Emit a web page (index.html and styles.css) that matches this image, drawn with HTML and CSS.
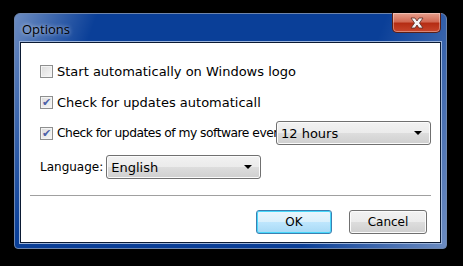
FILE: index.html
```html
<!DOCTYPE html>
<html lang="en">
<head>
  <meta charset="UTF-8">
  <title>Options</title>
  <link rel="stylesheet" href="styles.css">
</head>
<body>
  <div class="window">
    <div class="title-bar">
      <span class="title">Options</span>
      <button class="close-button">
        <svg width="16" height="12" viewBox="0 0 16 12">
          <path d="M2 1 L6 1 L8 4 L10 1 L14 1 L10.5 6 L14 11 L10 11 L8 8 L6 11 L2 11 L5.5 6 Z" fill="#f4f4f4" stroke="#5a2a22" stroke-width="0.8"/>
        </svg>
      </button>
    </div>

    <div class="client">
      <div class="options">
        <label class="row">
          <span class="checkbox"></span>
          <span class="label-text">Start automatically on Windows logo</span>
        </label>
        <label class="row">
          <span class="checkbox checked">&#10004;</span>
          <span class="label-text">Check for updates automaticall</span>
        </label>
        <div class="row">
          <span class="checkbox checked">&#10004;</span>
          <span class="label-text clipped">Check for updates of my software ever</span>
          <div class="dropdown">
            <span>12 hours</span>
            <span class="arrow"></span>
          </div>
        </div>
        <div class="row language-row">
          <span class="label-text">Language:</span>
          <div class="dropdown">
            <span>English</span>
            <span class="arrow"></span>
          </div>
        </div>
      </div>

      <div class="separator"></div>

      <div class="buttons">
        <button class="win-button default">OK</button>
        <button class="win-button">Cancel</button>
      </div>
    </div>
  </div>
</body>
</html>
```

FILE: styles.css
```css
* {
  box-sizing: border-box;
  margin: 0;
  padding: 0;
}

body {
  background: #000;
  width: 463px;
  height: 266px;
  padding-top: 13px;
  padding-left: 14px;
  font-family: Tahoma, "DejaVu Sans", sans-serif;
}

.window {
  width: 433px;
  height: 236px;
  border-radius: 6px 6px 4px 4px;
  border: 1px solid #6e86ad;
  background:
    linear-gradient(110deg, rgba(255,255,255,0.4) 0%, rgba(255,255,255,0) 16%, rgba(255,255,255,0) 72%, rgba(255,255,255,0.4) 100%),
    #0a3f98;
  padding: 0 5px 5px 5px;
  display: flex;
  flex-direction: column;
}

.title-bar {
  height: 28px;
  display: flex;
  justify-content: space-between;
  align-items: flex-start;
}

.title {
  font-family: "Open Sans", "Noto Sans", sans-serif;
  font-size: 13px;
  color: #000;
  padding-top: 6px;
  padding-left: 2px;
  text-shadow: 0 0 4px rgba(255,255,255,0.8);
}

.close-button {
  width: 49px;
  height: 20px;
  margin-top: -1px;
  border: 1px solid #5a1f16;
  border-top: none;
  border-radius: 0 0 5px 5px;
  background: linear-gradient(#e7a08e 0%, #d26a54 45%, #b52d14 55%, #c8462c 100%);
  box-shadow: inset 0 0 0 1px rgba(255,255,255,0.35);
  display: flex;
  align-items: center;
  justify-content: center;
}

.client {
  flex: 1;
  background: #fff;
  border: 1px solid #0b1a33;
  box-shadow: 0 0 0 1px #9cb4da;
  display: flex;
  flex-direction: column;
}

.options {
  display: flex;
  flex-direction: column;
  padding: 18px 0 0 19px;
}

.row {
  display: flex;
  align-items: center;
  height: 20px;
  margin-bottom: 11px;
  font-size: 13px;
  color: #000;
}

.row:nth-child(3) {
  margin-bottom: 14px;
}

.checkbox {
  flex-shrink: 0;
  width: 13px;
  height: 13px;
  border: 1px solid #8e8f8f;
  background: linear-gradient(135deg, #dcdcdc, #f7f7f7);
  box-shadow: inset 0 0 0 1px #f4f4f4;
  margin-right: 4px;
  font-size: 11px;
  line-height: 11px;
  text-align: center;
  color: #4c61a8;
}

.label-text {
  white-space: nowrap;
  flex-shrink: 0;
}

.clipped {
  width: 219px;
  overflow: hidden;
  font-size: 12.3px;
  letter-spacing: -0.5px;
}

.language-row .label-text {
  font-size: 12px;
  margin-right: 3px;
}

.dropdown {
  flex-shrink: 0;
  width: 155px;
  height: 24px;
  border: 1px solid #707070;
  border-radius: 3px;
  background: linear-gradient(#f2f2f2 0%, #ebebeb 50%, #dddddd 51%, #cfcfcf 100%);
  box-shadow: inset 0 0 0 1px #fbfbfb;
  display: flex;
  align-items: center;
  justify-content: space-between;
  padding: 0 8px 0 4px;
  font-size: 13px;
}

.arrow {
  width: 0;
  height: 0;
  border-left: 4px solid transparent;
  border-right: 4px solid transparent;
  border-top: 4px solid #000;
}

.separator {
  height: 1px;
  background: #a0a0a0;
  margin: 7px 9px 0 9px;
}

.buttons {
  display: flex;
  justify-content: flex-end;
  gap: 17px;
  padding: 14px 13px 0 0;
}

.win-button {
  width: 76px;
  height: 24px;
  border: 1px solid #707070;
  border-radius: 3px;
  background: linear-gradient(#f2f2f2 0%, #ebebeb 50%, #dddddd 51%, #cfcfcf 100%);
  box-shadow: inset 0 0 0 1px #fbfbfb;
  font-family: Tahoma, "DejaVu Sans", sans-serif;
  font-size: 12px;
  color: #000;
}

.win-button + .win-button {
  width: 78px;
}

.win-button.default {
  border-color: #3c7fb1;
  background: linear-gradient(#eaf6fd 0%, #d9f0fc 50%, #bee6fd 51%, #a7d9f5 100%);
  box-shadow: inset 0 0 0 1px #48d8fb;
}
```
